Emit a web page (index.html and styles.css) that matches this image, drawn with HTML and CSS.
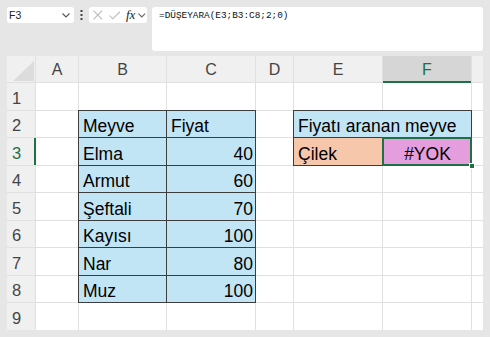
FILE: index.html
```html
<!DOCTYPE html>
<html lang="tr">
<head>
<meta charset="utf-8">
<title>DÜŞEYARA</title>
<link rel="stylesheet" href="styles.css">
</head>
<body>
<div class="topbar">
  <div class="namebox">
    <span>F3</span>
    <svg class="chev" width="8" height="5" viewBox="0 0 8 5"><polyline points="0.5,0.5 4,4 7.5,0.5" fill="none" stroke="#555" stroke-width="1.1"/></svg>
  </div>
  <div class="dots">
    <svg width="3" height="10" viewBox="0 0 3 10"><rect x="0.5" y="0" width="2" height="2" fill="#444"/><rect x="0.5" y="4" width="2" height="2" fill="#444"/><rect x="0.5" y="8" width="2" height="2" fill="#444"/></svg>
  </div>
  <div class="fbtns">
    <svg class="ico-x" width="10" height="10" viewBox="0 0 10 10"><path d="M0.5 0.5 L9.5 9.5 M9.5 0.5 L0.5 9.5" stroke="#b9b9b9" stroke-width="1.1" fill="none"/></svg>
    <svg class="ico-ok" width="12" height="9" viewBox="0 0 12 9"><polyline points="0.5,4.5 4,8 11.5,0.5" fill="none" stroke="#b9b9b9" stroke-width="1.1"/></svg>
    <span class="fx">fx</span>
    <svg class="chev" width="8" height="5" viewBox="0 0 8 5"><polyline points="0.5,0.5 4,4 7.5,0.5" fill="none" stroke="#666" stroke-width="1.1"/></svg>
  </div>
  <div class="formula">=DÜŞEYARA(E3;B3:C8;2;0)</div>
</div>

<div class="sheet">
  <div class="corner"><svg width="21" height="20" viewBox="0 0 21 20"><polygon points="21,0 21,20 0,20" fill="#dcdcdc"/></svg></div>
  <div class="hd">A</div>
  <div class="hd">B</div>
  <div class="hd">C</div>
  <div class="hd">D</div>
  <div class="hd">E</div>
  <div class="hd hd-sel">F</div>
  <div class="hd"></div>

  <div class="rh">1</div>
  <div class="c"></div><div class="c"></div><div class="c"></div><div class="c"></div><div class="c"></div><div class="c"></div><div class="c"></div>

  <div class="rh">2</div>
  <div class="c"></div>
  <div class="c t">Meyve</div>
  <div class="c t">Fiyat</div>
  <div class="c"></div>
  <div class="c t span2">Fiyatı aranan meyve</div>
  <div class="c"></div>

  <div class="rh rh-sel">3</div>
  <div class="c"></div>
  <div class="c t">Elma</div>
  <div class="c t num">40</div>
  <div class="c"></div>
  <div class="c t peach">Çilek</div>
  <div class="c t pink sel">#YOK</div>
  <div class="c"></div>

  <div class="rh">4</div>
  <div class="c"></div>
  <div class="c t">Armut</div>
  <div class="c t num">60</div>
  <div class="c"></div><div class="c"></div><div class="c"></div><div class="c"></div>

  <div class="rh">5</div>
  <div class="c"></div>
  <div class="c t">Şeftali</div>
  <div class="c t num">70</div>
  <div class="c"></div><div class="c"></div><div class="c"></div><div class="c"></div>

  <div class="rh">6</div>
  <div class="c"></div>
  <div class="c t">Kayısı</div>
  <div class="c t num">100</div>
  <div class="c"></div><div class="c"></div><div class="c"></div><div class="c"></div>

  <div class="rh">7</div>
  <div class="c"></div>
  <div class="c t">Nar</div>
  <div class="c t num">80</div>
  <div class="c"></div><div class="c"></div><div class="c"></div><div class="c"></div>

  <div class="rh">8</div>
  <div class="c"></div>
  <div class="c t">Muz</div>
  <div class="c t num">100</div>
  <div class="c"></div><div class="c"></div><div class="c"></div><div class="c"></div>

  <div class="rh">9</div>
  <div class="c"></div><div class="c"></div><div class="c"></div><div class="c"></div><div class="c"></div><div class="c"></div><div class="c"></div>
</div>
</body>
</html>
```

FILE: styles.css
```css
html, body {
  margin: 0;
  padding: 0;
}
body {
  width: 490px;
  height: 337px;
  overflow: hidden;
  background: #e6e6e6;
  font-family: "Liberation Sans", Arial, sans-serif;
  color: #000;
}

.topbar {
  display: flex;
  align-items: flex-start;
  padding: 7px 7px 0 7px;
  height: 44px;
}
.namebox {
  width: 67px;
  height: 16px;
  box-sizing: border-box;
  background: #fff;
  border-radius: 3px;
  display: flex;
  align-items: center;
  justify-content: space-between;
  padding: 0 4px 0 2px;
  font-size: 10.5px;
  color: #222;
}
.dots {
  width: 15px;
  height: 16px;
  display: flex;
  align-items: center;
  justify-content: center;
}
.fbtns {
  width: 58px;
  height: 16px;
  box-sizing: border-box;
  background: #fff;
  border-radius: 3px;
  display: flex;
  align-items: center;
  padding: 0 1px 0 4px;
}
.ico-x { margin-right: 6px; }
.ico-ok { margin-right: 6px; }
.fx {
  font-family: "Liberation Serif", serif;
  font-style: italic;
  font-size: 13px;
  color: #222;
  margin-right: 3px;
  line-height: 12px;
}
.formula {
  flex: 1;
  margin-left: 5px;
  height: 44px;
  box-sizing: border-box;
  background: #fff;
  border-radius: 3px;
  padding: 3px 7px;
  font-family: "Liberation Mono", monospace;
  font-size: 9.4px;
  line-height: 11px;
  color: #111;
}

.sheet {
  margin: 5px 7px 0 7px;
  display: grid;
  grid-template-columns: 28px 42px 87px 88px 37px 88px 88px 11px;
  grid-template-rows: 26px 27px 26px 27px 26px 27px 26px 27px 26px 27px;
  gap: 1px;
  background: #e0e0e0;
}
.corner {
  background: #f0f0f0;
  display: flex;
  align-items: flex-end;
  justify-content: flex-end;
  padding: 0 1px 1px 0;
}
.hd {
  background: #f0f0f0;
  display: flex;
  align-items: flex-end;
  justify-content: center;
  font-size: 16px;
  line-height: 20px;
  padding-bottom: 2px;
  color: #444;
}
.hd-sel {
  background: #d6d6d6;
  color: #1e7145;
  box-shadow: inset 0 -1px 0 #1e7145, 0 1px 0 #1e7145;
}
.rh {
  background: #f0f0f0;
  display: flex;
  align-items: flex-end;
  padding: 0 0 2px 5px;
  font-size: 16.5px;
  line-height: 20px;
  color: #444;
}
.rh-sel {
  color: #1e7145;
  box-shadow: inset -1px 0 0 #1e7145, 1px 0 0 #1e7145;
}
.c {
  background: #fff;
  display: flex;
  align-items: flex-end;
  padding: 0 3px 1px 4px;
  font-size: 17.5px;
  line-height: 20px;
  white-space: nowrap;
  overflow: visible;
}
.t {
  background: #c2e5f5;
  outline: 1px solid #3d3d3d;
}
.num { justify-content: flex-end; padding-right: 2px; }
.span2 { grid-column: span 2; }
.peach { background: #f7c7ac; }
.pink { background: #e59edd; justify-content: center; }
.sel {
  position: relative;
  outline: 2px solid #1e7145;
  outline-offset: -1px;
}
.sel::after {
  content: "";
  position: absolute;
  right: -4px;
  bottom: -4px;
  width: 4px;
  height: 4px;
  background: #1e7145;
  border: 1px solid #fff;
}
```
